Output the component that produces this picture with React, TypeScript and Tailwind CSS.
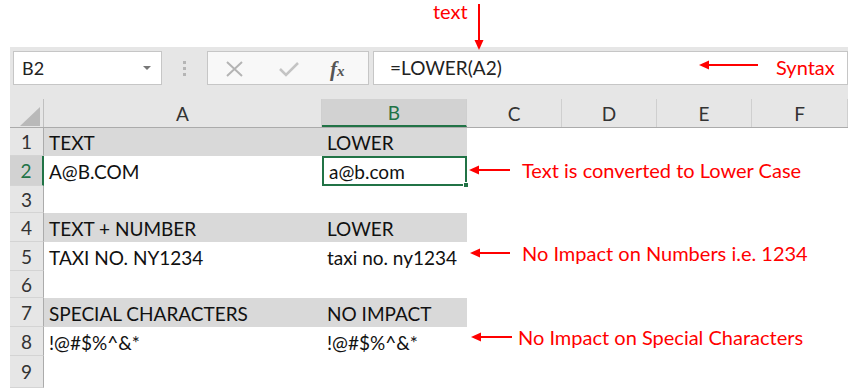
import React from "react";

const cols = [
  { key: "A", w: "w-[278px]" },
  { key: "B", w: "w-[145px]" },
  { key: "C", w: "w-[95px]" },
  { key: "D", w: "w-[95px]" },
  { key: "E", w: "w-[95px]" },
  { key: "F", w: "flex-1" },
];

const rows = [
  { n: 1, h: "h-[28px]", a: "TEXT", b: "LOWER", band: true },
  { n: 2, h: "h-[30px]", a: "A@B.COM", b: "a@b.com", active: true },
  { n: 3, h: "h-[27px]", a: "", b: "" },
  { n: 4, h: "h-[29px]", a: "TEXT + NUMBER", b: "LOWER", band: true },
  { n: 5, h: "h-[29px]", a: "TAXI NO. NY1234", b: "taxi no. ny1234" },
  { n: 6, h: "h-[27px]", a: "", b: "" },
  { n: 7, h: "h-[29px]", a: "SPECIAL CHARACTERS", b: "NO IMPACT", band: true },
  { n: 8, h: "h-[29px]", a: "!@#$%^&*", b: "!@#$%^&*" },
  { n: 9, h: "h-[32px]", a: "", b: "" },
];

function Arrow({ x1, y1, x2, y2 }: { x1: number; y1: number; x2: number; y2: number }) {
  const ang = Math.atan2(y2 - y1, x2 - x1);
  const len = 10;
  const wid = 4.5;
  const bx = x2 - len * Math.cos(ang);
  const by = y2 - len * Math.sin(ang);
  const px = -Math.sin(ang) * wid;
  const py = Math.cos(ang) * wid;
  return (
    <g>
      <line x1={x1} y1={y1} x2={bx} y2={by} stroke="#ff0000" strokeWidth="2" />
      <polygon points={`${x2},${y2} ${bx + px},${by + py} ${bx - px},${by - py}`} fill="#ff0000" />
    </g>
  );
}

export default function App() {
  return (
    <div className="relative w-[848px] h-[388px] overflow-hidden bg-white font-['Lato',sans-serif]">
      <div className="h-[47px]" />
      <div className="pl-[10px]">
        {/* formula bar */}
        <div className="bg-[#e6e6e6] h-[52px] flex items-start pt-[4px] pl-[3px]">
          <div className="w-[149px] h-[34px] bg-white border border-[#c6c6c6] flex items-center justify-between pl-[8px] pr-[10px]">
            <span className="text-[18px] text-[#222]">B2</span>
            <span className="w-0 h-0 border-l-[4px] border-r-[4px] border-t-[4px] border-l-transparent border-r-transparent border-t-[#777]" />
          </div>
          <div className="w-[45px] h-[34px] flex flex-col items-center justify-center gap-[3px]">
            <span className="w-[3px] h-[3px] bg-[#b5b5b5]" />
            <span className="w-[3px] h-[3px] bg-[#b5b5b5]" />
            <span className="w-[3px] h-[3px] bg-[#b5b5b5]" />
          </div>
          <div className="relative w-[162px] h-[34px] bg-[#f8f8f8] border border-[#c6c6c6] flex items-center">
            <svg width="160" height="32" viewBox="0 0 160 32">
              <path d="M19 10 L34 24 M34 10 L19 24" stroke="#b4b4b4" strokeWidth="2" fill="none" />
              <path d="M72 17 L78 23 L90 11" stroke="#c4c4c4" strokeWidth="2.5" fill="none" />
            </svg>
            <span className="absolute left-[122px] top-[2px] font-['Liberation_Serif',serif] italic text-[21px] text-[#555] font-bold">
              f<span className="text-[15px]">x</span>
            </span>
          </div>
          <div className="ml-[4px] flex-1 h-[34px] bg-white border border-[#c6c6c6] flex items-center pl-[16px]">
            <span className="text-[19px] text-[#222]">=LOWER(A2)</span>
          </div>
        </div>
        {/* column headers */}
        <div className="flex h-[29px] bg-[#e6e6e6] border-b border-[#ababab]">
          <div className="w-[34px] border-r border-[#c0c0c0] relative">
            <svg className="absolute left-[10px] top-[8px]" width="20" height="19" viewBox="0 0 20 19">
              <polygon points="20,0 20,19 0,19" fill="#b9b9b9" />
            </svg>
          </div>
          {cols.map((c) => (
            <div
              key={c.key}
              className={`${c.w} flex items-center justify-center pt-[2px] text-[19px] border-r border-[#cfcfcf] ${
                c.key === "B" ? "bg-[#d2d2d2] text-[#217346] border-b-2 border-b-[#217346]" : "text-[#333]"
              }`}
            >
              {c.key}
            </div>
          ))}
        </div>
        {/* rows */}
        {rows.map((r) => (
          <div key={r.n} className={`flex ${r.h}`}>
            <div
              className={`w-[34px] flex items-center justify-center pt-[2px] text-[19px] border-b border-[#d4d4d4] ${
                r.active
                  ? "bg-[#d2d2d2] text-[#217346] border-r-2 border-r-[#217346]"
                  : "bg-[#e6e6e6] text-[#333] border-r border-r-[#ababab]"
              }`}
            >
              {r.n}
            </div>
            <div className={`w-[278px] flex items-center pl-[5px] pt-[3px] text-[19px] text-[#111] ${r.band ? "bg-[#d9d9d9]" : ""}`}>
              {r.a}
            </div>
            <div
              className={`w-[145px] flex items-center pl-[5px] pt-[3px] text-[19px] text-[#111] relative ${r.band ? "bg-[#d9d9d9]" : ""} ${
                r.active ? "border-2 border-[#217346] pl-[3px]" : ""
              }`}
            >
              {r.b}
              {r.active && <span className="absolute right-[-4px] bottom-[-4px] w-[6px] h-[6px] bg-[#217346] border border-white" />}
            </div>
            <div className="flex-1" />
          </div>
        ))}
      </div>

      {/* annotations */}
      <span className="absolute left-[433px] top-[-4px] text-[20px] text-[#ff0000]">text</span>
      <span className="absolute left-[776px] top-[52px] text-[20px] text-[#ff0000]">Syntax</span>
      <span className="absolute left-[522px] top-[155px] text-[20px] text-[#ff0000]">Text is converted to Lower Case</span>
      <span className="absolute left-[522px] top-[238px] text-[20px] text-[#ff0000]">No Impact on Numbers i.e. 1234</span>
      <span className="absolute left-[518px] top-[322px] text-[20px] text-[#ff0000]">No Impact on Special Characters</span>
      <svg className="absolute left-0 top-0 pointer-events-none" width="848" height="388" viewBox="0 0 848 388">
        <Arrow x1={479} y1={4} x2={479} y2={50} />
        <Arrow x1={758} y1={65} x2={699} y2={65} />
        <Arrow x1={510} y1={170} x2={469} y2={170} />
        <Arrow x1={510} y1={253} x2={470} y2={253} />
        <Arrow x1={512} y1={337} x2={471} y2={337} />
      </svg>
    </div>
  );
}
